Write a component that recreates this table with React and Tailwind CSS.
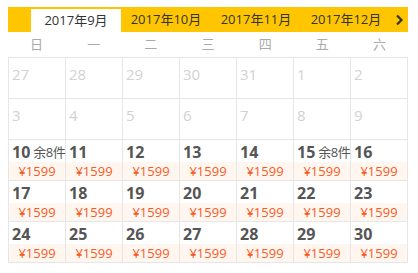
const tabs = ["2017年9月", "2017年10月", "2017年11月", "2017年12月"];
const weekdays = ["日", "一", "二", "三", "四", "五", "六"];

const prevDays = [27, 28, 29, 30, 31, 1, 2, 3, 4, 5, 6, 7, 8, 9];
const stock = { 10: "余8件", 15: "余8件" };

const font = { fontFamily: '"Open Sans", "Noto Sans CJK SC", sans-serif' };

function EmptyCell({ day }) {
  return (
    <div className="h-[41px] border-r border-b border-[#e6e6e6] px-[3px] pt-[4px]">
      <span className="text-[15px] leading-[18px] text-[#d2d2d2]">{day}</span>
    </div>
  );
}

function PriceCell({ day }) {
  return (
    <div className="h-[41px] border-r border-b border-[#e6e6e6] flex flex-col">
      <div className="h-[22px] flex items-end px-[3px] pb-[1px] whitespace-nowrap">
        <span className="text-[16px] leading-[18px] font-bold text-[#555]">{day}</span>
        {stock[day] && (
          <span className="ml-[3px] text-[13px] leading-[18px] text-[#555] tracking-[-0.5px]">
            {stock[day]}
          </span>
        )}
      </div>
      <div className="h-[18px] bg-[#fff6f0] flex items-center justify-center">
        <span className="text-[13px] leading-[18px] text-[#f95a1f]">¥1599</span>
      </div>
    </div>
  );
}

export default function App() {
  const days = [];
  for (let d = 10; d <= 30; d++) days.push(d);

  return (
    <div className="w-[418px] h-[273px] bg-white pt-[7px] pl-[8px]" style={font}>
      <div className="w-[400px] h-[25px] bg-[#ffc600] flex items-end pl-[23px]">
        {tabs.map((t, i) => (
          <div
            key={t}
            className={
              i === 0
                ? "w-[90px] h-[23px] bg-white flex items-center justify-center text-[13px] text-[#333]"
                : "w-[90px] h-[25px] flex items-center justify-center text-[13px] text-[#333]"
            }
          >
            {t}
          </div>
        ))}
        <div className="flex-1 h-[25px] flex items-center justify-center">
          <svg width="9" height="12" viewBox="0 0 9 12">
            <path d="M2 1.5 L6.5 6 L2 10.5" fill="none" stroke="#333" strokeWidth="2.2" />
          </svg>
        </div>
      </div>

      <div className="w-[400px] grid grid-cols-7 h-[25px]">
        {weekdays.map((w) => (
          <div key={w} className="flex items-center justify-center text-[13px] text-[#aaa]">
            {w}
          </div>
        ))}
      </div>

      <div className="w-[400px] grid grid-cols-7 border-l border-t border-[#e6e6e6]">
        {prevDays.map((d, i) => (
          <EmptyCell key={"p" + i} day={d} />
        ))}
        {days.map((d) => (
          <PriceCell key={d} day={d} />
        ))}
      </div>
    </div>
  );
}
